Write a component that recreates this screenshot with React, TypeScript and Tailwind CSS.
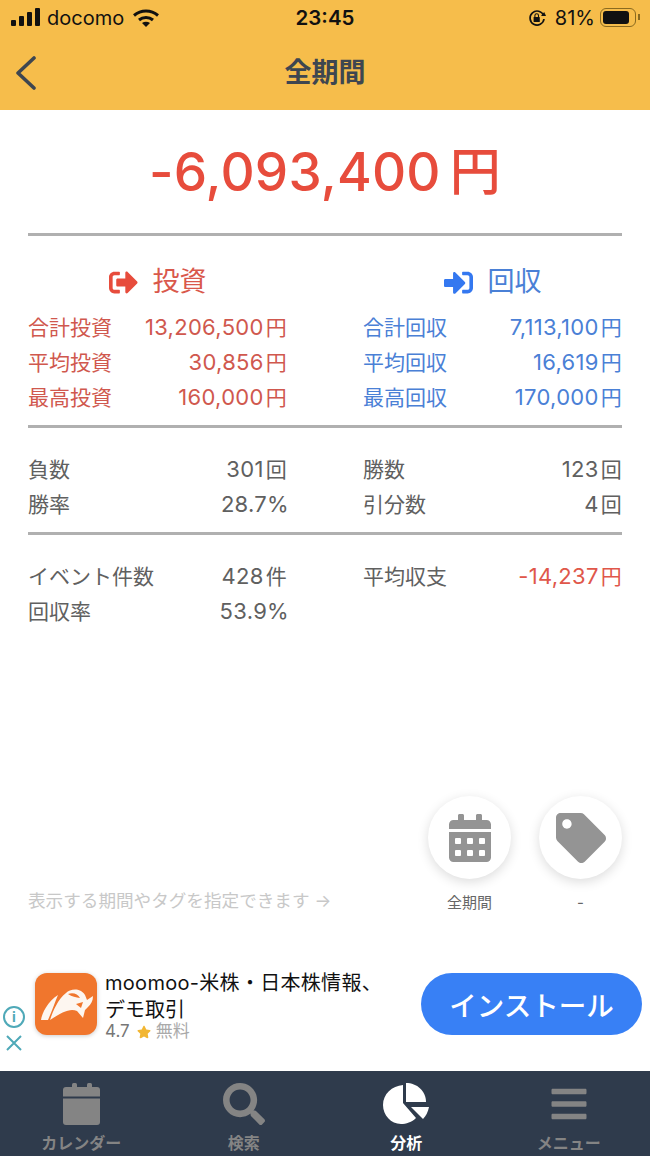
import { ReactNode } from 'react';
import { FaSignOutAlt, FaSignInAlt, FaCalendarAlt, FaTag, FaSearch, FaBars, FaStar } from 'react-icons/fa';

const FONT = "font-['Inter','Noto_Sans_CJK_JP',sans-serif]";

function Rule() {
  return <div className="h-[3px] bg-[#b0b0b0]" />;
}

function Row({ label, value, unit, tone = 'text-[#606060]', valueTone }: { label: string; value: string; unit?: string; tone?: string; valueTone?: string }) {
  return (
    <div className={`flex h-[35px] items-center justify-between text-[21px] ${tone}`}>
      <span>{label}</span>
      <span className={`text-[22px] tracking-[0.3px] ${unit ? '' : '-mr-[2px]'} ${valueTone ?? ''}`}>
        {value}
        {unit && <span className="ml-[2px] text-[21px]">{unit}</span>}
      </span>
    </div>
  );
}

function StatusBar() {
  return (
    <div className="flex h-[36px] items-center justify-between px-[6px] text-[#111111]">
      <div className="flex w-[200px] items-center pl-[5px]">
        <svg className="-mt-[2px]" width="29" height="18" viewBox="0 0 29 18" fill="currentColor">
          <rect x="0" y="12" width="5" height="6" rx="1" />
          <rect x="8" y="8" width="5" height="10" rx="1" />
          <rect x="16" y="4" width="5" height="14" rx="1" />
          <rect x="24" y="0" width="5" height="18" rx="1" />
        </svg>
        <span className="ml-[7px] text-[20px]">docomo</span>
        <svg className="ml-[9px] -mt-[1px]" width="26" height="18" viewBox="0 0 26 18" fill="none" stroke="currentColor" strokeWidth="3">
          <path d="M1 6.5 C8 0.5 18 0.5 25 6.5" />
          <path d="M6 11 C10 7.5 16 7.5 20 11" />
          <path d="M13 18 L9 14 C11.5 12.4 14.5 12.4 17 14 Z" fill="currentColor" stroke="none" />
        </svg>
      </div>
      <span className="text-[20.5px] font-semibold">23:45</span>
      <div className="flex w-[200px] items-center justify-end pr-[4px]">
        <svg width="18" height="18" viewBox="0 0 18 18" fill="none" stroke="currentColor" strokeWidth="1.7">
          <path d="M15.6 6.5 A7 7 0 1 0 16 10" />
          <path d="M13 7 L18 7 L16.2 3 Z" fill="currentColor" stroke="none" />
          <rect x="5.6" y="8" width="6.2" height="5" rx="0.6" fill="currentColor" stroke="none" />
          <path d="M6.9 8 V6.6 A1.8 1.8 0 0 1 10.5 6.6 V8" strokeWidth="1.1" />
        </svg>
        <span className="ml-[9px] text-[20px]">81%</span>
        <div className="ml-[5px] -mt-[2px] flex h-[19px] w-[36px] items-center rounded-[6px] border-[1.5px] border-[#8a6a1f] p-[2px]">
          <div className="h-full w-[26px] rounded-[3px] bg-[#111111]" />
        </div>
        <div className="ml-[2px] -mt-[2px] h-[6px] w-[2px] bg-[#8a6a1f]" />
      </div>
    </div>
  );
}

function Fab({ label, children }: { label: string; children: ReactNode }) {
  return (
    <div className="flex w-[83px] flex-col items-center">
      <div className="flex h-[83px] w-[83px] items-center justify-center rounded-full bg-white text-[#949494] shadow-[0_3px_12px_rgba(0,0,0,0.14)]">
        {children}
      </div>
      <span className="mt-[14px] h-[20px] text-[15px] leading-[20px] text-[#666666]">{label}</span>
    </div>
  );
}

function Tab({ label, active, children }: { label: string; active?: boolean; children: ReactNode }) {
  return (
    <div className={`flex w-[162.5px] flex-col items-center pt-[8px] ${active ? 'text-white' : 'text-[#848484]'}`}>
      <div className="flex h-[50px] items-center justify-center">{children}</div>
      <span className="mt-[3px] text-[16px] font-semibold leading-[22px]">{label}</span>
    </div>
  );
}

function BullLogo() {
  return (
    <svg className="drop-shadow-[0_1px_2px_rgba(0,0,0,0.2)]" width="62" height="62" viewBox="0 0 62 62">
      <rect width="62" height="62" rx="12" fill="#f0762d" />
      <path d="M6 47 C7 40 13 28 23 22 C20 29 17 38 13 47 Z" fill="#fdf6f0" />
      <path d="M15 47 C18 38 23 26 31 20 C35 16 45 14 50 22 L52 27 L58 23 C58 28 56 31 53 34 L50 37 L48 45 L42 38 C36 35 28 38 15 47 Z" fill="#fdf6f0" />
      <path d="M33 21 C38 19 43 21 45 25 C41 24 37 24 33 21 Z" fill="#f0762d" />
      <path d="M41 31 L48 29 L46 35 Z" fill="#f0762d" />
    </svg>
  );
}

export default function App() {
  return (
    <div className={`flex h-[1156px] w-[650px] flex-col overflow-hidden bg-white ${FONT}`}>
      {/* Header */}
      <header className="h-[110px] bg-[#f6bd4b]">
        <StatusBar />
        <div className="relative flex h-[74px] items-center justify-center pt-[1px] text-[#3e4650]">
          <svg className="absolute left-[15px] top-[20px]" width="22" height="34" viewBox="0 0 22 34" fill="none" stroke="currentColor" strokeWidth="3.6" strokeLinecap="round" strokeLinejoin="round">
            <path d="M19 2 L3 17 L19 32" />
          </svg>
          <span className="text-[27px] font-bold">全期間</span>
        </div>
      </header>

      {/* Summary */}
      <main className="flex flex-1 flex-col px-[28px]">
        <div className="flex h-[123px] items-center justify-center pt-[2px] text-[53px] font-medium tracking-[0.2px] text-[#e74c3c]">
          -6,093,400<span className="ml-[9px] text-[51px]">円</span>
        </div>
        <Rule />

        <div className="grid grid-cols-2 gap-x-[76px] pt-[28px]">
          <div>
            <div className="flex h-[36px] items-center justify-center text-[#e74c3c]">
              <FaSignOutAlt size={29} />
              <span className="ml-[15px] text-[27px] text-[#d9584b]">投資</span>
            </div>
            <div className="mt-[10px]">
              <Row label="合計投資" value="13,206,500" unit="円" tone="text-[#d0584e]" />
              <Row label="平均投資" value="30,856" unit="円" tone="text-[#d0584e]" />
              <Row label="最高投資" value="160,000" unit="円" tone="text-[#d0584e]" />
            </div>
          </div>
          <div>
            <div className="flex h-[36px] items-center justify-center text-[#3478f0]">
              <FaSignInAlt size={29} />
              <span className="ml-[15px] text-[27px] text-[#4a80d6]">回収</span>
            </div>
            <div className="mt-[10px]">
              <Row label="合計回収" value="7,113,100" unit="円" tone="text-[#4a80d6]" />
              <Row label="平均回収" value="16,619" unit="円" tone="text-[#4a80d6]" />
              <Row label="最高回収" value="170,000" unit="円" tone="text-[#4a80d6]" />
            </div>
          </div>
        </div>

        <div className="mt-[10px]"><Rule /></div>
        <div className="grid grid-cols-2 gap-x-[76px] pt-[24px]">
          <div>
            <Row label="負数" value="301" unit="回" />
            <Row label="勝率" value="28.7%" />
          </div>
          <div>
            <Row label="勝数" value="123" unit="回" />
            <Row label="引分数" value="4" unit="回" />
          </div>
        </div>

        <div className="mt-[10px]"><Rule /></div>
        <div className="grid grid-cols-2 gap-x-[76px] pt-[24px]">
          <div>
            <Row label="イベント件数" value="428" unit="件" />
            <Row label="回収率" value="53.9%" />
          </div>
          <div>
            <Row label="平均収支" value="-14,237" unit="円" valueTone="text-[#e0574a]" />
          </div>
        </div>

        {/* Period and tag selectors */}
        <div className="mt-auto mb-[52px] flex items-end justify-between">
          <span className="text-[17.6px] leading-[24px] text-[#c8c8c8]">表示する期間やタグを指定できます →</span>
          <div className="flex gap-[28px]">
            <Fab label="全期間"><FaCalendarAlt size={48} /></Fab>
            <Fab label="-"><FaTag size={50} /></Fab>
          </div>
        </div>
      </main>

      {/* Ad banner */}
      <section className="relative flex h-[106px] items-start pl-[35px] pr-[8px] pt-[8px]">
        <div className="absolute left-[3px] top-[41px] flex flex-col items-center text-[#4fa9b8]">
          <div className="flex h-[22px] w-[22px] items-center justify-center rounded-full border-2 border-[#4fa9b8] text-[14px] font-bold leading-none">i</div>
          <svg className="mt-[6px]" width="18" height="18" viewBox="0 0 18 18" stroke="currentColor" strokeWidth="2" fill="none">
            <path d="M2 2 L16 16 M16 2 L2 16" />
          </svg>
        </div>
        <BullLogo />
        <div className="ml-[8px] -mt-[3px] w-[300px]">
          <div className="text-[20px] leading-[26px] text-[#111111] tracking-[0.3px]">moomoo-米株・日本株情報、</div>
          <div className="mt-[2px] text-[20px] leading-[24px] text-[#111111]">デモ取引</div>
          <div className="-mt-[1px] flex h-[22px] items-center text-[17px] text-[#777777]">
            4.7<FaStar className="ml-[7px] text-[#f2b632]" size={14} /><span className="ml-[5px] text-[#aaaaaa]">無料</span>
          </div>
        </div>
        <div className="ml-auto flex h-[62px] w-[221px] items-center justify-center rounded-full bg-[#3880f5] pt-[5px] text-[27.5px] font-medium text-white">
          インストール
        </div>
      </section>

      {/* Tab bar */}
      <nav className="flex h-[85px] bg-[#2f3b4c]">
        <Tab label="カレンダー">
          <svg width="37" height="42" viewBox="0 0 37 42" fill="currentColor">
            <rect x="9" y="0" width="5" height="8" rx="1.5" />
            <rect x="24" y="0" width="5" height="8" rx="1.5" />
            <path d="M3 4 H34 A3 3 0 0 1 37 7 V13.5 H0 V7 A3 3 0 0 1 3 4 Z" />
            <path d="M0 15.5 H37 V39 A3 3 0 0 1 34 42 H3 A3 3 0 0 1 0 39 Z" />
          </svg>
        </Tab>
        <Tab label="検索"><FaSearch size={42} /></Tab>
        <Tab label="分析" active>
          <svg width="46" height="42" viewBox="0 0 46 42" fill="currentColor">
            <path d="M20 2 V20 L33 35 C29 39 23 41 18 41 C8 41 0 32 0 22 C0 11 9 3 20 2 Z" />
            <path d="M23 0 C34 0 43 8 43 19 H23 Z" />
            <path d="M28 24 H46 C45 29 43 33 40 36 Z" />
          </svg>
        </Tab>
        <Tab label="メニュー"><FaBars size={40} /></Tab>
      </nav>
    </div>
  );
}
